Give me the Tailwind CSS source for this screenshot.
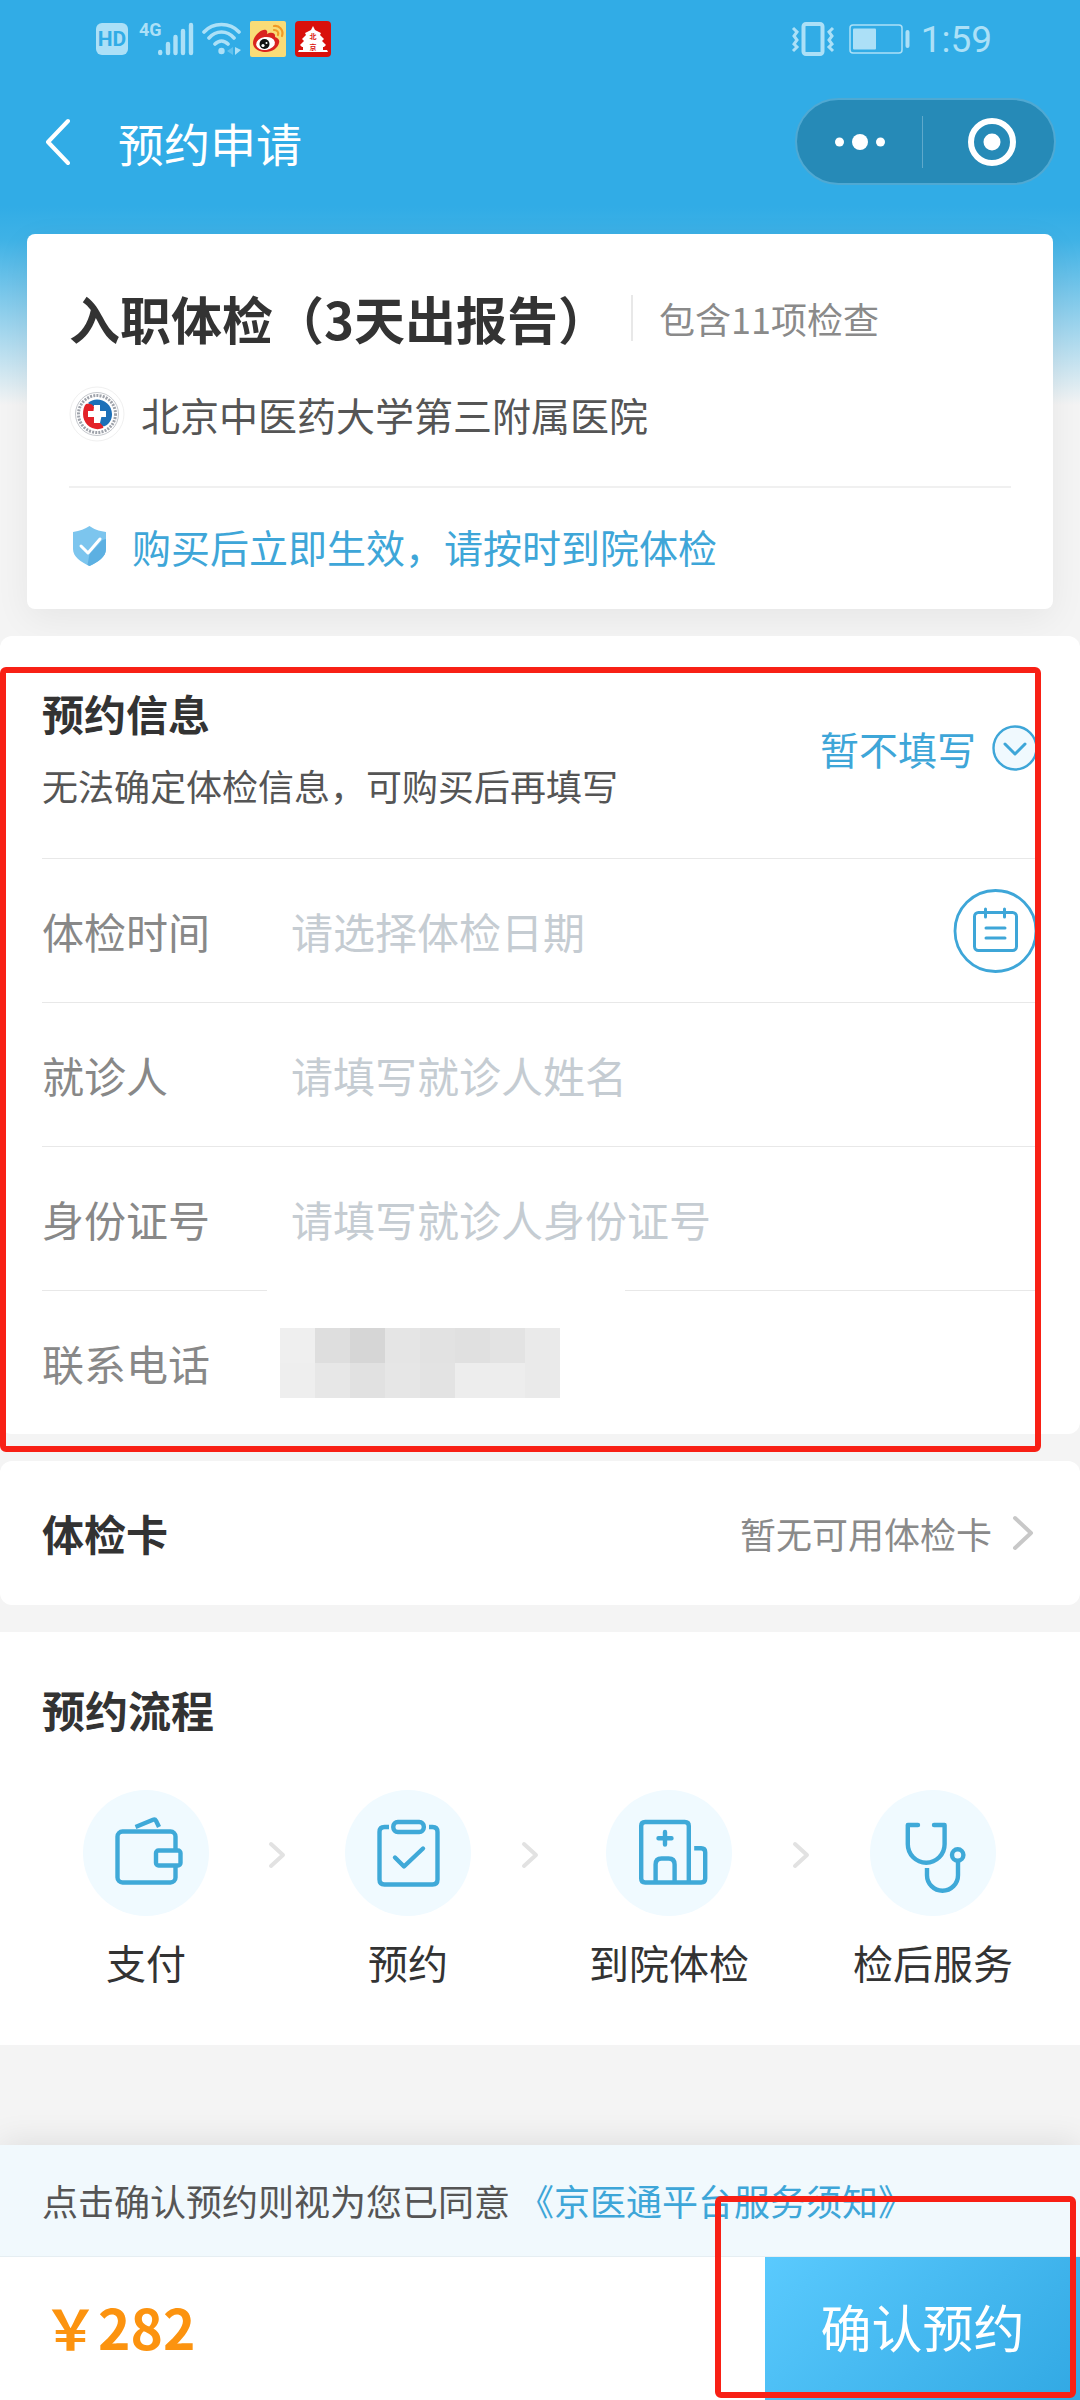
<!DOCTYPE html>
<html lang="zh-CN">
<head>
    <meta charset="UTF-8">
    <meta name="viewport" content="width=device-width, initial-scale=1.0">
    <title>预约申请</title>
    <script src="https://cdn.jsdelivr.net/npm/@tailwindcss/browser@4"></script>
</head>
<body class="bg-[#f4f4f4] font-['Noto_Sans_CJK_SC',sans-serif] text-[#333] antialiased">

    <div class="flex min-h-screen flex-col bg-[linear-gradient(to_bottom,#31ace6_0,#31ace6_206px,#3fb2e6_240px,#f4f4f4_405px)]">

        <!-- Status bar -->
        <div class="flex h-[78px] items-center justify-between pr-[88px] pl-24 text-[#ace0f7]">
            <div class="flex items-center">
                <span class="flex h-8 w-8 items-center justify-center rounded-md bg-[#ace0f7] font-[Roboto,sans-serif] text-[21px] leading-none font-bold text-[#31ace6]">HD</span>
                <span class="ml-[11px] self-start font-[Roboto,sans-serif] text-[18px] leading-none font-bold">4G</span>
                <svg class="-ml-1 h-[34px] w-[36px]" viewBox="0 0 36 34" fill="none" stroke="currentColor" stroke-width="4.400" stroke-linecap="round" aria-hidden="true">
                    <path d="M2.200 31v-1M10 31V22M17.500 31V15M25 31V9M33 31V3" />
                </svg>
                <svg class="ml-2 h-[34px] w-[40px]" viewBox="0 0 40 34" fill="none" stroke="currentColor" stroke-width="3.600" stroke-linecap="round" aria-hidden="true">
                    <path d="M2 10C11 0 28 0 37 10M7 16c7-8 18-8 25 0M13 22c4-4 9-4 13 0" />
                    <circle cx="19.500" cy="29" r="3.200" fill="currentColor" stroke="none" />
                    <path d="M33 25v8l6-5z" fill="currentColor" stroke="none" />
                    <path d="M31 25v8l-6-4z" fill="currentColor" stroke="none" opacity=".4" />
                </svg>
                <!-- Weibo -->
                <svg class="ml-2 h-9 w-9" viewBox="0 0 36 36" aria-hidden="true">
                    <rect width="36" height="36" rx="2" fill="#f9dc77" />
                    <path d="M3 22C3 15 12 7 16 9c2 1 1 3 1 4 3-2 9-2 8 3 3 1 5 3 4 6-1 5-7 9-13 9S3 28 3 22z" fill="#d9231f" />
                    <ellipse cx="15.500" cy="22.500" rx="9.500" ry="6.500" fill="#fff" transform="rotate(-8 15.500 22.500)" />
                    <circle cx="14.500" cy="23" r="5" fill="#111" />
                    <circle cx="13" cy="24.500" r="1.600" fill="#fff" />
                    <circle cx="16.500" cy="22" r="1" fill="#fff" />
                    <path d="M24 5c5-1 10 4 8 10M24 9c3 0 5 2 4 5" fill="none" stroke="#f09a25" stroke-width="2.200" stroke-linecap="round" />
                </svg>
                <!-- Beijing pagoda -->
                <svg class="ml-[9px] h-9 w-9" viewBox="0 0 36 36" aria-hidden="true">
                    <rect width="36" height="36" rx="4" fill="#d9100b" />
                    <path d="M18 5l2 4 6 3-1 2H11l-1-2 6-3zM11 14h14l4 4-2 2H9l-2-2zM9 20h18l4 4-2 2h-1v3h4l1 2H3l1-2h4v-3H7l-2-2z" fill="#fff" />
                    <text x="14.500" y="18" font-size="7" font-weight="700" fill="#d9100b">北</text>
                    <text x="14.500" y="29" font-size="7" font-weight="700" fill="#d9100b">京</text>
                </svg>
            </div>
            <div class="flex items-center">
                <svg class="h-[34px] w-[44px]" viewBox="0 0 44 34" fill="none" stroke="currentColor" aria-hidden="true">
                    <rect x="12.500" y="2" width="19" height="30" rx="2.500" stroke-width="4" />
                    <path d="M2 6l4 4-3 4 3 4-3 4 3 3-4 4M42 6l-4 4 3 4-3 4 3 4-3 3 4 4" stroke-width="3" />
                </svg>
                <svg class="ml-3.5 h-[30px] w-[62px]" viewBox="0 0 62 30" fill="none" stroke="currentColor" aria-hidden="true">
                    <rect x="1" y="1" width="52" height="28" rx="3" stroke-width="1.500" />
                    <rect x="4" y="4.500" width="23" height="21" rx="1" fill="currentColor" stroke="none" />
                    <path d="M58.500 8v14" stroke-width="4" stroke-linecap="round" />
                </svg>
                <span class="ml-2.5 font-[Roboto,sans-serif] text-[37px] leading-none">1:59</span>
            </div>
        </div>

        <!-- Navigation bar -->
        <header class="flex h-[127px] items-center justify-between pr-6 pl-[42px] text-white">
            <div class="flex items-center">
                <button type="button" aria-label="返回">
                    <svg class="h-12 w-7" viewBox="0 0 28 48" fill="none" stroke="currentColor" stroke-width="4" stroke-linecap="round" stroke-linejoin="round"><path d="M26 3L6 24l20 21" /></svg>
                </button>
                <h1 class="ml-12 text-[46px] leading-[60px]">预约申请</h1>
            </div>
            <div class="flex h-[87px] w-[261px] items-center rounded-full border-2 border-[#4fa9d3] bg-[#268ab7]">
                <button type="button" class="flex flex-1 justify-center" aria-label="更多">
                    <svg class="h-5 w-[52px]" viewBox="0 0 52 20" fill="currentColor"><circle cx="5.500" cy="10" r="4.500" /><circle cx="26" cy="10" r="8" /><circle cx="46.500" cy="10" r="4.500" /></svg>
                </button>
                <span class="h-[52px] w-px bg-[#5fa9cb]"></span>
                <button type="button" class="flex flex-1 justify-center pl-1.5" aria-label="关闭">
                    <svg class="h-[50px] w-[50px]" viewBox="0 0 50 50"><circle cx="25" cy="25" r="21" fill="none" stroke="currentColor" stroke-width="6" /><circle cx="25" cy="25" r="8.500" fill="currentColor" /></svg>
                </button>
            </div>
        </header>

        <!-- Package card -->
        <section class="mx-[27px] mt-[29px] rounded-lg bg-white px-[42px] pt-[49px] pb-[5px] shadow-[0_10px_36px_rgba(0,0,0,0.06)]">
            <div class="flex h-[70px] items-center">
                <h2 class="text-[51px] leading-[70px] font-bold">入职体检（3天出报告）</h2>
                <span class="ml-[22px] h-[46px] w-0.5 bg-[#e8e8e8]"></span>
                <span class="ml-[26px] text-[36px] leading-[60px] text-[#8a8a8a]">包含11项检查</span>
            </div>
            <div class="mt-[31px] flex h-[60px] items-center gap-4">
                <svg class="h-14 w-14" viewBox="0 0 56 56" aria-hidden="true">
                    <circle cx="28" cy="28" r="27" fill="#fff" stroke="#f0f0f0" />
                    <circle cx="28" cy="28" r="21.500" fill="none" stroke="#c4c7cc" stroke-width="1" />
                    <circle cx="28" cy="28" r="18.500" fill="none" stroke="#9ea2aa" stroke-width="3" stroke-dasharray="2 1.200" pathLength="116" />
                    <circle cx="28" cy="28" r="15.500" fill="#fff" />
                    <path d="M19 17c8-8 24-2 24 11 0 6-3 10-7 12-3 1-5-1-5-3l2-9-5-8c-3 1-6 0-9-3z" fill="#1c70b8" />
                    <path d="M17 18c3-1 7 0 8 3l-1 8 8 9c2 2 3 3 2 4-9 4-20-3-20-14 0-4 1-8 3-10z" fill="#e32228" />
                    <path d="M25 19h6v6h6v6h-6v6h-6v-6h-6v-6h6z" fill="#fff" />
                </svg>
                <span class="text-[39px] leading-[60px] text-[#555]">北京中医药大学第三附属医院</span>
            </div>
            <div class="mt-[42px] flex h-[118px] items-center gap-[21px] border-t-2 border-[#f0f0f0] text-[#3ea6d8]">
                <svg class="h-[42px] w-[42px]" viewBox="0 0 42 42" aria-hidden="true">
                    <path d="M20.500 1c4 3 9 5 16.500 6v17c0 8-8 13-16.500 17C12 37 4 32 4 24V7c7-1 12-3 16.500-6z" fill="#7cc5ee" />
                    <path d="M37 14v10c0 8-8 13-16.500 17l-2-1 2-11 13-14z" fill="#5cb0e2" />
                    <path d="M12 21l7 7 12-14" fill="none" stroke="#fff" stroke-width="3" stroke-linecap="round" stroke-linejoin="round" />
                </svg>
                <span class="text-[39px] leading-[60px]">购买后立即生效，请按时到院体检</span>
            </div>
        </section>

        <!-- Booking form -->
        <form class="relative mt-[27px] rounded-xl bg-white px-[42px]">
            <div class="flex items-start justify-between pt-[47px] pb-[43px]">
                <div>
                    <h2 class="text-[42px] leading-[60px] font-bold">预约信息</h2>
                    <p class="mt-3 text-[36px] leading-[60px] text-[#555]">无法确定体检信息，可购买后再填写</p>
                </div>
                <button type="button" class="flex h-[130px] items-center gap-[14px] text-[39px] leading-[60px] text-[#3ea6d8]">
                    暂不填写
                    <svg class="h-12 w-12" viewBox="0 0 48 48" fill="none" stroke="currentColor" aria-hidden="true"><circle cx="25" cy="24" r="21.500" fill="#f0f9fe" stroke-width="2.400" /><path d="M15 20l10 10 10-10" stroke-width="3" stroke-linecap="round" stroke-linejoin="round" /></svg>
                </button>
            </div>
            <div class="flex h-36 items-center border-t border-[#e8e8e8] text-[42px] leading-[60px]">
                <label for="date" class="w-[249px] text-[#888]">体检时间</label>
                <input id="date" type="text" placeholder="请选择体检日期" class="min-w-0 flex-1 placeholder:text-[#c5ccd2]">
                <button type="button" class="text-[#3ea6d8]" aria-label="选择日期">
                    <svg class="h-[86px] w-[86px]" viewBox="0 0 86 86" fill="none" stroke="currentColor" stroke-width="3" stroke-linecap="round"><circle cx="43.500" cy="43" r="40.500" stroke-width="2.800" /><rect x="22.500" y="24.500" width="42" height="38" rx="4" /><path d="M33.500 21v8M52.500 21v8M34 40h19M34 50h19" /></svg>
                </button>
            </div>
            <div class="flex h-36 items-center border-t border-[#e8e8e8] text-[42px] leading-[60px]">
                <label for="name" class="w-[249px] text-[#888]">就诊人</label>
                <input id="name" type="text" placeholder="请填写就诊人姓名" class="min-w-0 flex-1 placeholder:text-[#c5ccd2]">
            </div>
            <div class="flex h-36 items-center border-t border-[#e8e8e8] text-[42px] leading-[60px]">
                <label for="idcard" class="w-[249px] text-[#888]">身份证号</label>
                <input id="idcard" type="text" placeholder="请填写就诊人身份证号" class="min-w-0 flex-1 placeholder:text-[#c5ccd2]">
            </div>
            <div class="relative flex h-36 items-center border-t border-[#e8e8e8] text-[42px] leading-[60px]">
                <!-- Covered stretch of the divider above the hidden number -->
                <span class="absolute -top-px left-[225px] h-px w-[358px] bg-white"></span>
                <span class="w-[238px] text-[#888]">联系电话</span>
                <div class="grid grid-cols-[repeat(8,35px)] grid-rows-[repeat(2,35px)]">
                    <span class="bg-[#efefef]"></span><span class="bg-[#dedede]"></span><span class="bg-[#d6d6d6]"></span><span class="bg-[#e5e5e5]"></span><span class="bg-[#e2e2e2]"></span><span class="bg-[#e0e0e0]"></span><span class="bg-[#e3e3e3]"></span><span class="bg-[#eaeaea]"></span>
                    <span class="bg-[#eeeeee]"></span><span class="bg-[#e7e7e7]"></span><span class="bg-[#e1e1e1]"></span><span class="bg-[#e6e6e6]"></span><span class="bg-[#e3e3e3]"></span><span class="bg-[#ededed]"></span><span class="bg-[#ededed]"></span><span class="bg-[#eaeaea]"></span>
                </div>
            </div>
            <!-- Highlight frame -->
            <div class="pointer-events-none absolute top-[31px] right-[39px] -bottom-[18px] left-0 rounded-md border-[6px] border-[#f82015]"></div>
        </form>

        <!-- Exam card -->
        <section class="mt-[27px] flex h-36 items-center justify-between rounded-xl bg-white px-[42px]">
            <h2 class="text-[42px] leading-[60px] font-bold">体检卡</h2>
            <a href="#" class="flex items-center gap-4 text-[36px] leading-[60px] text-[#8a8a8a]">
                暂无可用体检卡
                <svg class="h-9 w-[30px]" viewBox="0 0 30 36" fill="none" stroke="#c8c8c8" stroke-width="4" stroke-linecap="round" stroke-linejoin="round" aria-hidden="true"><path d="M7 3l16 15L7 33" /></svg>
            </a>
        </section>

        <!-- Process -->
        <section class="mt-[27px] bg-white pt-[47px] pb-[53px]">
            <h2 class="px-[42px] text-[43px] leading-[60px] font-bold">预约流程</h2>
            <div class="mt-[51px] grid grid-cols-[126px_136fr_126px_118fr_160px_104fr_160px] justify-items-center pr-[67px] pl-[83px] text-[40px] leading-[60px]">
                <div class="flex flex-col items-center gap-4">
                    <svg class="h-[126px] w-[126px]" viewBox="0 0 126 126" fill="none" stroke="#3fa9d8" stroke-width="4.400" stroke-linejoin="round" aria-hidden="true">
                        <circle cx="63" cy="63" r="63" fill="#f0faff" stroke="none" />
                        <path d="M52.500 37L70 29.800q2-.800 3 1l3 6.200" />
                        <rect x="34.500" y="41.500" width="58" height="51" rx="5" />
                        <rect x="73" y="60.500" width="24.500" height="15" rx="2.500" fill="#f0faff" />
                    </svg>
                    <span>支付</span>
                </div>
                <svg class="h-[130px] w-6" viewBox="0 0 24 130" fill="none" stroke="#e2e2e2" stroke-width="4" stroke-linecap="round" stroke-linejoin="round" aria-hidden="true"><path d="M6 54l12 11L6 76" /></svg>
                <div class="flex flex-col items-center gap-4">
                    <svg class="h-[126px] w-[126px]" viewBox="0 0 126 126" fill="none" stroke="#3fa9d8" stroke-width="4.400" stroke-linejoin="round" aria-hidden="true">
                        <circle cx="63" cy="63" r="63" fill="#f0faff" stroke="none" />
                        <path d="M44 37h-4.500q-5 0-5 5v47.500q0 5 5 5h48q5 0 5-5V42q0-5-5-5H84" />
                        <rect x="48.300" y="32" width="30.500" height="10" rx="4.500" />
                        <path d="M50 67.500l9 9L78 58.500" stroke-linecap="round" />
                    </svg>
                    <span>预约</span>
                </div>
                <svg class="h-[130px] w-6" viewBox="0 0 24 130" fill="none" stroke="#e2e2e2" stroke-width="4" stroke-linecap="round" stroke-linejoin="round" aria-hidden="true"><path d="M6 54l12 11L6 76" /></svg>
                <div class="flex flex-col items-center gap-4">
                    <svg class="h-[126px] w-[126px]" viewBox="0 0 126 126" fill="none" stroke="#3fa9d8" stroke-width="4.400" stroke-linejoin="round" aria-hidden="true">
                        <circle cx="63" cy="63" r="63" fill="#f0faff" stroke="none" />
                        <path d="M82.800 92.500V36q0-4-4-4H39.200q-4 0-4 4v52.500q0 4 4 4h56q4 0 4-4V62.300q0-4-4-4h-7" />
                        <path d="M49.600 92V74.500q0-6 6-6h7q6 0 6 6V92" />
                        <path d="M59 42v12.500M52.500 48.300h13" stroke-linecap="round" />
                    </svg>
                    <span>到院体检</span>
                </div>
                <svg class="h-[130px] w-6" viewBox="0 0 24 130" fill="none" stroke="#e2e2e2" stroke-width="4" stroke-linecap="round" stroke-linejoin="round" aria-hidden="true"><path d="M6 54l12 11L6 76" /></svg>
                <div class="flex flex-col items-center gap-4">
                    <svg class="h-[126px] w-[126px]" viewBox="0 0 126 126" fill="none" stroke="#3fa9d8" stroke-width="4.400" stroke-linejoin="round" aria-hidden="true">
                        <circle cx="63" cy="63" r="63" fill="#f0faff" stroke="none" />
                        <path d="M48 35H37.800v19.300a18.400 18.400 0 0 0 36.800 0V35H64" stroke-linecap="round" />
                        <path d="M57 78v7.200a15.500 15.500 0 0 0 31 0V72" />
                        <circle cx="87.700" cy="65" r="5.700" />
                    </svg>
                    <span>检后服务</span>
                </div>
            </div>
        </section>

        <!-- Bottom bar -->
        <footer class="relative mt-auto bg-white shadow-[0_-4px_30px_rgba(0,0,0,0.09)]">
            <p class="flex h-28 items-center gap-2 border-b border-[#e6eef2] bg-[#f1f9fd] px-[42px] pb-0.5 text-[36px] leading-[60px] text-[#555]">
                点击确认预约则视为您已同意
                <a href="#" class="text-[#3ea6d8]">《京医通平台服务须知》</a>
            </p>
            <div class="flex h-[143px] items-center justify-between pl-[43px]">
                <span class="pb-1.5 text-[55px] leading-[60px] font-bold text-[#fc930f]">￥282</span>
                <button type="button" class="h-full w-[315px] bg-[linear-gradient(135deg,#5acafe,#31a8e3)] pb-1.5 text-[51px] leading-[60px] text-white">确认预约</button>
            </div>
            <!-- Highlight frame -->
            <div class="pointer-events-none absolute right-1 bottom-0.5 h-[202px] w-[361px] rounded-md border-[6px] border-[#f82015]"></div>
        </footer>
    </div>

</body>
</html>
